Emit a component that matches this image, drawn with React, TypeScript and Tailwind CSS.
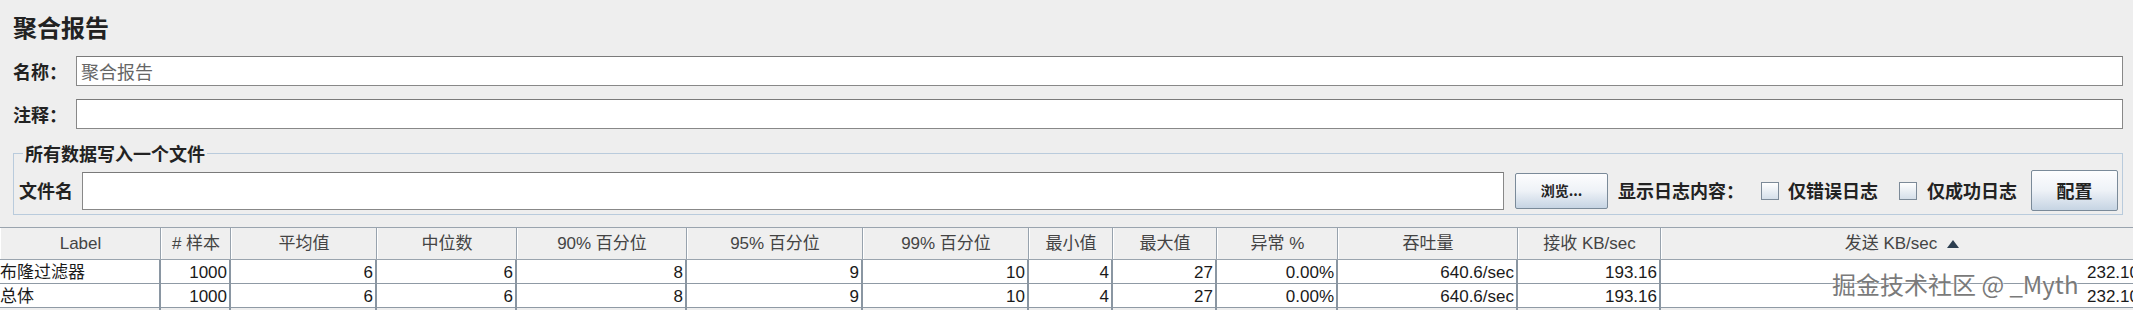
import React from 'react'

const cjk = '[font-family:"Noto_Sans_CJK_SC",sans-serif]'

const cols = [
  { h: 'Label', v: ['布隆过滤器', '总体'], left: true },
  { h: '# 样本', v: ['1000', '1000'] },
  { h: '平均值', v: ['6', '6'] },
  { h: '中位数', v: ['6', '6'] },
  { h: '90% 百分位', v: ['8', '8'] },
  { h: '95% 百分位', v: ['9', '9'] },
  { h: '99% 百分位', v: ['10', '10'] },
  { h: '最小值', v: ['4', '4'] },
  { h: '最大值', v: ['27', '27'] },
  { h: '异常 %', v: ['0.00%', '0.00%'] },
  { h: '吞吐量', v: ['640.6/sec', '640.6/sec'] },
  { h: '接收 KB/sec', v: ['193.16', '193.16'] },
  { h: '发送 KB/sec', v: ['232.10', '232.10'], sort: true },
]

const gridCols =
  'grid grid-cols-[161px_70px_146px_140px_170px_176px_166px_84px_104px_121px_180px_143px_482px]'

function Checkbox() {
  return (
    <span className="block w-[18px] h-[18px] border border-[#7c8a98] bg-linear-to-b from-white to-[#d5dfe9]" />
  )
}

function Btn({ children, className }: { children: React.ReactNode; className: string }) {
  return (
    <div
      className={`flex items-center justify-center border border-[#7a8a99] rounded-[2px] bg-linear-to-b from-[#fdfdfe] via-[#eef2f7] to-[#c6d4e3] font-bold text-[#222] ${className}`}
    >
      {children}
    </div>
  )
}

export default function App() {
  return (
    <div className={`relative w-[2133px] h-[310px] overflow-hidden bg-[#eeeeee] text-[#222] ${cjk}`}>
      {/* title */}
      <div className="h-[53px] pl-[13px] text-[24px] leading-[53px] font-bold">聚合报告</div>

      {/* name */}
      <div className="mt-[3px] flex items-center h-[30px] pl-[13px] pr-[10px]">
        <span className="w-[63px] text-[18px] font-bold">名称：</span>
        <div className="flex-1 h-full flex items-center bg-white border border-[#888] border-t-[#7a7a7a] pl-[4px] text-[18px] text-[#666]">
          聚合报告
        </div>
      </div>

      {/* comment */}
      <div className="mt-[13px] flex items-center h-[30px] pl-[13px] pr-[10px]">
        <span className="w-[63px] text-[18px] font-bold">注释：</span>
        <div className="flex-1 h-full bg-white border border-[#888] border-t-[#7a7a7a]" />
      </div>

      {/* write to file */}
      <fieldset className="mt-[15px] ml-[13px] mr-[10px] border border-[#b9cbdc] pl-[5px] pr-[4px] pt-[8px] pb-[3px]">
        <legend className="ml-[4px] px-[2px] text-[18px] leading-[18px] font-bold">所有数据写入一个文件</legend>
        <div className="flex items-center h-[41px]">
          <span className="w-[63px] text-[18px] font-bold">文件名</span>
          <div className="flex-1 h-[38px] bg-white border border-[#888] border-t-[#7a7a7a]" />
          <Btn className="ml-[11px] w-[93px] h-[36px] text-[14px]">浏览...</Btn>
          <span className="ml-[10px] w-[143px] text-[18px] font-bold whitespace-nowrap">显示日志内容：</span>
          <Checkbox />
          <span className="ml-[9px] w-[111px] text-[18px] font-bold">仅错误日志</span>
          <Checkbox />
          <span className="ml-[10px] w-[104px] text-[18px] font-bold">仅成功日志</span>
          <Btn className="w-[87px] h-[41px] text-[18px]">配置</Btn>
        </div>
      </fieldset>

      {/* table */}
      <div className={`mt-[12px] w-[2141px] [font-family:"Liberation_Sans","Noto_Sans_CJK_SC",sans-serif] text-[17px]`}>
        <div className={`${gridCols} h-[33px] border-t border-[#9aa4ae] border-b border-b-[#9aa4ae] bg-[#efefef]`}>
          {cols.map((c, i) => (
            <div
              key={i}
              className="flex items-center justify-center gap-[10px] border-r border-r-[#97a2ad] border-l border-l-white text-[#444] whitespace-nowrap"
            >
              <span>{c.h}</span>
              {c.sort && (
                <svg width="12" height="8" viewBox="0 0 12 8">
                  <path d="M6 0 L12 8 L0 8 Z" fill="#2c3e50" />
                </svg>
              )}
            </div>
          ))}
        </div>
        {[0, 1].map((r) => (
          <div key={r} className={`${gridCols} h-[24px] bg-white border-b border-b-[#8f9aa5]`}>
            {cols.map((c, i) => (
              <div
                key={i}
                className={`flex items-center border-r-2 border-r-[#8a96a2] whitespace-nowrap text-[#1a1a1a] ${
                  c.left ? 'justify-start' : 'justify-end pr-[2px]'
                }`}
              >
                {c.v[r]}
              </div>
            ))}
          </div>
        ))}
      </div>

      {/* watermark */}
      <div className="absolute left-[1832px] top-[268px] text-[24px] leading-[32px] text-[#7a7a7a] whitespace-nowrap [text-shadow:0_0_2px_#fff,0_0_2px_#fff]">
        掘金技术社区 @ _Myth
      </div>
    </div>
  )
}
